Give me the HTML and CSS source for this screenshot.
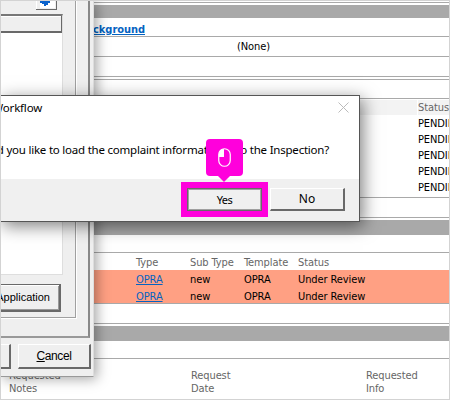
FILE: index.html
```html
<!DOCTYPE html>
<html lang="en">
<head>
<meta charset="utf-8">
<title>Workflow</title>
<link rel="stylesheet" href="styles.css">
</head>
<body>
<main class="page">
  <div class="gap first"></div>
  <div class="band b13"></div>
  <div class="row h18"><a class="heading" href="#">Background</a></div>
  <div class="row h20"><span class="none">(None)</span></div>
  <div class="row h20"></div>
  <div class="row h3"></div>
  <div class="row h19"></div>
  <div class="list">
    <div class="list-head"><span></span><span class="t muted">Status</span></div>
    <div class="t item">PENDING</div>
    <div class="t item">PENDING</div>
    <div class="t item">PENDING</div>
    <div class="t item">PENDING</div>
    <div class="t item">PENDING</div>
  </div>
  <div class="row h20"></div>
  <div class="gap g2"></div>
  <div class="band b15"></div>
  <div class="row h18"></div>
  <div class="grid t muted head"><span>Type</span><span>Sub Type</span><span class="tpl">Template</span><span>Status</span></div>
  <div class="records">
    <div class="grid t"><a href="#">OPRA</a><span>new</span><span>OPRA</span><span>Under Review</span></div>
    <div class="grid t"><a href="#">OPRA</a><span>new</span><span>OPRA</span><span>Under Review</span></div>
  </div>
  <div class="row h20"></div>
  <div class="gap g2"></div>
  <div class="band b15"></div>
  <div class="row h18"></div>
  <div class="requests t muted"><span>Requested<br>Notes</span><span>Request<br>Date</span><span>Requested<br>Info</span></div>
</main>

<section class="back">
  <div class="panel">
    <div class="group">
      <div class="tool"><svg width="15" height="8" viewBox="0 0 15 8"><path d="M0 0H15V8H0Z" fill="#fff"/><path d="M0 0H10V3H8V5H6V6H4V4H2V3H0Z" fill="#0a62cc"/></svg></div>
      <div class="box"><div class="boxhead"></div></div>
      <div class="btn app">Application</div>
    </div>
  </div>
  <div class="actions"><div class="btn ok"></div><div class="btn cancel"><span><u>C</u>ancel</span></div></div>
</section>

<section class="dialog">
  <header><span class="title">Workflow</span>
    <svg width="11" height="11" viewBox="0 0 11 11"><path d="M.5 .5L10.5 10.5M10.5 .5L.5 10.5" stroke="#bbb" fill="none"/></svg></header>
  <p class="message">Would you like to load the complaint information into the Inspection?</p>
  <footer>
    <div class="mark"><div class="dbtn yes">Yes</div></div>
    <div class="dbtn no">No</div>
  </footer>
</section>
<div class="tip"><svg width="13" height="19" viewBox="0 0 13 19"><path d="M6 1V9H1V6Q1 1 6 1Z" fill="#fff"/><rect x=".75" y=".75" width="11.5" height="17.5" rx="5.75" fill="none" stroke="#fff" stroke-width="1.2"/></svg></div>
<div class="frame"></div>
</body>
</html>
```

FILE: styles.css
```css
* { box-sizing: border-box; }
body { margin: 0; width: 450px; height: 400px; overflow: hidden; position: relative; background: #fff; color: #000; }
a { color: #0563c1; }
.page { height: 400px; overflow: hidden; }
.t, .none { font: 11px/16px "DejaVu Sans Condensed", "DejaVu Sans", sans-serif; font-stretch: condensed; letter-spacing: -.1px; white-space: nowrap; }
.muted { color: #666; }
.gap.first { height: 5px; border-bottom: 2px solid #fff; box-shadow: inset 0 -1px #aaa; }
.g2 { height: 2px; }
.band { background: #a9a9a9; }
.b13 { height: 13px; }
.b15 { height: 15px; }
.row { border-bottom: 1px solid #a9a9a9; }
.h18 { height: 18px; }
.h19 { height: 19px; }
.h20 { height: 20px; }
.h3 { height: 3px; }
.b13 + .row { height: 19px; }
.heading { display: block; width: 145px; text-align: right; font: bold 11px/24px "DejaVu Sans Condensed", "DejaVu Sans", sans-serif; font-stretch: condensed; letter-spacing: -.05px; }
.none { display: block; margin-left: 237px; line-height: 19px; letter-spacing: -.1px; }
.list { height: 99px; padding-top: 1px; border-bottom: 1px solid #a9a9a9; }
.list-head { height: 15px; display: grid; grid-template-columns: 417px 33px; column-gap: 1px; }
.list-head span { background: #f3f3f3; line-height: 15px; }
.item { padding-left: 418px; line-height: 18px; height: 16px; letter-spacing: -.1px; }
.grid { display: grid; grid-template-columns: 54px 54px 54px 1fr; padding-left: 136px; }
.head { height: 17px; line-height: 19px; }
.records { background: #ffa083; border-bottom: 1px solid #a9a9a9; height: 34px; }
.records .grid { height: 17px; line-height: 19px; }
.requests { display: grid; grid-template-columns: 182px 175px 1fr; padding: 10px 0 0 9px; line-height: 13px; }

.back { position: absolute; left: 0; top: 0; width: 94px; height: 377px; background: #efefef; border-right: 1px solid #ddd; border-bottom: 1px solid #999; box-shadow: 3px 2px 12px rgba(0,0,0,.35); overflow: hidden; }
.panel { width: 90px; height: 338px; border-right: 2px solid #888; border-bottom: 2px solid #999; }
.group { width: 77px; height: 319px; border-right: 1px solid #fff; border-bottom: 1px solid #fff; box-shadow: inset -1px -1px #a0a0a0; }
.tool { width: 21px; height: 10px; margin-left: 36px; border: solid #696969; border-width: 0 1px 1px 0; box-shadow: inset 1px 0 #fff; overflow: hidden; }
.tool svg { display: block; margin-left: 4px; height: 8px; width: 15px; }
.box { margin-top: 4px; width: 63px; height: 261px; background: #fff; border: solid #dedede; border-width: 2px 1px 1px 0; border-top-color: #777; }
.boxhead { width: 62px; height: 17px; background: #efefef; border: solid #696969; border-width: 0 1px 2px 0; box-shadow: inset 0 1px #fff; }
.btn { border: solid #696969; border-width: 1px 2px 2px 1px; border-left-color: #fff; border-top-color: #fff; font: 11px "Liberation Sans", sans-serif; background: #efefef; }
.app { width: 61px; height: 28px; margin-top: 9px; border-top: 1px solid #696969; box-shadow: inset 0 1px #fff, inset -1px -1px #999; line-height: 24px; text-align: right; padding-right: 9px; direction: rtl; overflow: hidden; }
.actions { display: flex; gap: 7px; padding-top: 6px; }
.ok { width: 11px; height: 25px; }
.cancel { width: 73px; height: 25px; text-align: center; line-height: 22px; font-size: 12px; letter-spacing: -.4px; }

.dialog { position: absolute; left: 0; top: 95px; width: 360px; height: 127px; overflow: hidden; background: #fff; border: 1px solid #555; border-left: 0; font: 12px "Noto Sans", sans-serif; }
.dialog { box-shadow: 3px 4px 16px rgba(0,0,0,.5); }
.dialog header { height: 45px; display: flex; justify-content: space-between; padding: 6px 10px 0 0; }
.title { width: 42px; display: flex; justify-content: flex-end; line-height: 11px; font-size: 11.5px; letter-spacing: -.2px; }
.message { margin: 0 30px 0 0; height: 38px; font-size: 11.5px; line-height: 18px; white-space: nowrap; display: flex; justify-content: flex-end; letter-spacing: -.22px; }
footer { height: 42px; background: #f0f0f0; display: flex; padding: 3px 0 0 181px; gap: 2px; }
.mark { width: 87px; height: 35px; padding: 6px; background: #ff00dc; }
.dbtn { width: 75px; height: 23px; text-align: center; font-size: 11px; background: #f0f0f0; line-height: 19px; }
.yes { border: 1px solid #696969; box-shadow: inset 0 0 0 1px #a0a0a0; line-height: 22px; letter-spacing: -.5px; }
.no { margin-top: 6px; border: solid #fff; border-width: 1px 2px 2px 1px; border-right-color: #696969; border-bottom-color: #696969; font-size: 12px; }
.tip { position: absolute; left: 206px; top: 139px; width: 37px; height: 37px; border-radius: 4px; background: #ff00dc; display: flex; align-items: center; justify-content: center; }
.tip::after { content: ""; position: absolute; left: 12px; top: 37px; border: 6.5px solid transparent; border-top: 6px solid #ff00dc; border-bottom: 0; }
.frame { position: absolute; inset: 0; border: 1px solid #d3d3d3; }
```
